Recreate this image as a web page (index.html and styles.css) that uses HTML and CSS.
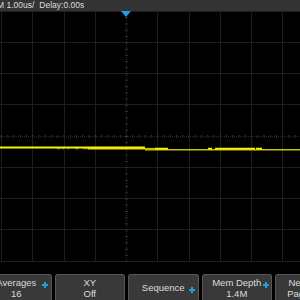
FILE: index.html
```html
<!DOCTYPE html>
<html lang="en">
<head>
    <meta charset="UTF-8">
    <meta name="viewport" content="width=device-width, initial-scale=1.0">
    <title>Scope</title>
    <link rel="stylesheet" href="styles.css">
</head>
<body>
    <div class="scope">
        <div class="topbar">
            <span class="timebase">M 1.00us/</span>
            <span class="delay">Delay:0.00s</span>
        </div>

        <div class="screen">
            <svg class="grid" width="300" height="251" viewBox="0 11 300 251">
                <g stroke="#1e1e1e" stroke-width="1">
                    <path d="M0 11.5H300M0 42.5H300M0 73.5H300M0 104.5H300M0 167.5H300M0 198.5H300M0 229.5H300M0 261.5H300"/>
                    <path d="M1.5 11V262M32.5 11V262M64.5 11V262M95.5 11V262M157.5 11V262M189.5 11V262M220.5 11V262M251.5 11V262M282.5 11V262"/>
                </g>
                <g stroke="#2a2a2a" stroke-width="1" stroke-dasharray="1 1">
                    <path d="M0 136.5H300"/>
                    <path d="M126.5 11V262"/>
                </g>
                <g stroke="#3a3a3a" stroke-width="1" stroke-dasharray="1 5.25">
                    <path d="M1 135.5H300M1 137.5H300"/>
                    <path d="M125.5 11V262M127.5 11V262"/>
                </g>
                <!-- trace -->
                <g fill="none">
                    <path d="M0 147.5H145" stroke="#f5f500" stroke-width="2"/>
                    <path d="M88 148.8H145" stroke="#e6e600" stroke-width="1.4"/>
                    <path d="M57 148.7h3M62 148.7h2M67 148.7h2M75 148.7h4M83 148.7h5" stroke="#b8b800" stroke-width="1"/>
                    <path d="M145 149.8H300" stroke="#c4c400" stroke-width="1.6"/>
                    <path d="M145 148.4H155" stroke="#d8d800" stroke-width="1"/>
                    <path d="M155 148.6H168M208 148.6h4M215 148.6H255M256 148.6H262" stroke="#f5f500" stroke-width="1.6"/>
                </g>
            </svg>
            <div class="trigger"></div>
        </div>

        <div class="menu">
            <div class="key">
                <span>Averages</span>
                <span>16</span>
                <svg class="knob" width="6" height="6" viewBox="0 0 6 6"><path d="M3 0V6M0 3H6" stroke="#1e9fe0" stroke-width="2"/></svg>
            </div>
            <div class="key">
                <span>XY</span>
                <span>Off</span>
            </div>
            <div class="key">
                <span>Sequence</span>
                <svg class="knob knob-mid" width="6" height="6" viewBox="0 0 6 6"><path d="M3 0V6M0 3H6" stroke="#1e9fe0" stroke-width="2"/></svg>
            </div>
            <div class="key">
                <span>Mem Depth</span>
                <span>1.4M</span>
                <svg class="knob" width="6" height="6" viewBox="0 0 6 6"><path d="M3 0V6M0 3H6" stroke="#1e9fe0" stroke-width="2"/></svg>
            </div>
            <div class="key key-next">
                <span>Next</span>
                <span>Page</span>
            </div>
        </div>
    </div>
</body>
</html>
```

FILE: styles.css
```css
html, body {
    margin: 0;
    padding: 0;
    background-color: #000;
    overflow: hidden;
}
.scope {
    width: 300px;
    height: 300px;
    overflow: hidden;
    font-family: "Liberation Sans", Arial, sans-serif;
    color: #dcdcdc;
}
.topbar {
    height: 11px;
    background-color: #343434;
    font-size: 8.5px;
    line-height: 11px;
    white-space: nowrap;
    display: flex;
}
.timebase {
    margin-left: -3px;
}
.delay {
    margin-left: 5px;
}
.screen {
    position: relative;
    height: 251px;
}
.grid {
    display: block;
}
.trigger {
    position: absolute;
    top: 0;
    left: 121px;
    width: 0;
    height: 0;
    border-left: 5.5px solid transparent;
    border-right: 5.5px solid transparent;
    border-top: 6px solid #1ea0e0;
}
.menu {
    display: flex;
    gap: 3px;
    margin-top: 12px;
    margin-left: -19px;
}
.key {
    position: relative;
    flex: none;
    width: 70.5px;
    height: 28px;
    box-sizing: border-box;
    padding-bottom: 2px;
    background-color: #393939;
    border: 1px solid #565656;
    border-bottom: none;
    border-radius: 3px 3px 0 0;
    display: flex;
    flex-direction: column;
    align-items: center;
    justify-content: center;
    font-size: 9.5px;
    line-height: 11px;
    white-space: nowrap;
}
.key-next {
    padding-right: 24px;
}
.knob {
    position: absolute;
    left: 60px;
    top: 7px;
}
.knob-mid {
    top: 12px;
}
```
